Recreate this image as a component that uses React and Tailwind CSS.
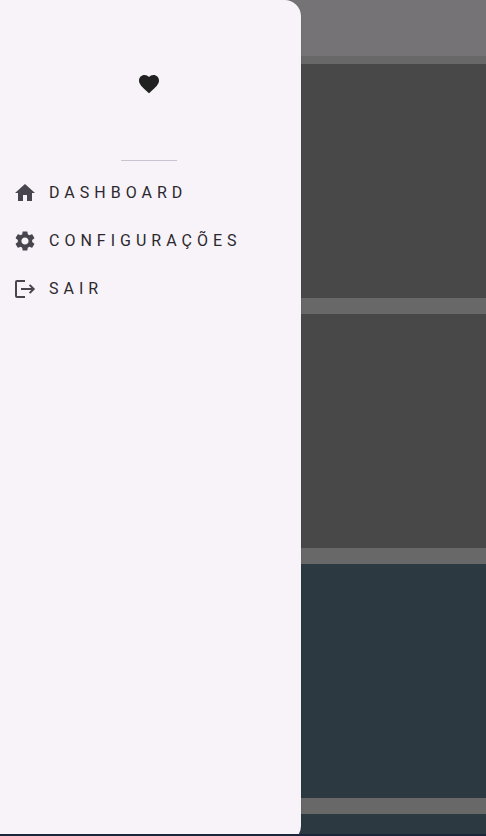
import { MdFavorite, MdHome, MdSettings } from "react-icons/md";

function LogoutIcon(props) {
  return (
    <svg viewBox="0 0 24 24" fill="none" stroke="currentColor" strokeWidth="2" {...props}>
      <path d="M12 4H4a1 1 0 0 0-1 1v14a1 1 0 0 0 1 1h8" />
      <path d="M8 12h12.5" />
      <path d="M16.6 7.9l4.1 4.1-4.1 4.1" />
    </svg>
  );
}

const items = [
  { label: "DASHBOARD", icon: MdHome },
  { label: "CONFIGURAÇÕES", icon: MdSettings },
  { label: "SAIR", icon: LogoutIcon },
];

function Drawer() {
  return (
    <aside className="absolute top-0 left-0 -bottom-2 w-[301px] rounded-r-2xl bg-[#f7f3f9] pr-1 shadow-[0_0_1px_#00000080]">
      <header className="flex flex-col items-center pt-[72px]">
        <MdFavorite className="size-6 text-[#212121]" aria-hidden="true" />
        <hr className="mt-16 w-14 border-t border-[#cac4d0]" />
      </header>
      <nav className="mt-2">
        <ul>
          {items.map(({ label, icon: Icon }) => (
            <li key={label}>
              <button
                type="button"
                className="flex h-12 w-full items-center gap-3 pl-[13px] text-left text-base tracking-[5px] text-[#2b292e]"
              >
                <Icon className="size-6 shrink-0 text-[#49454f]" aria-hidden="true" />
                <span>{label}</span>
              </button>
            </li>
          ))}
        </ul>
      </nav>
    </aside>
  );
}

export default function App() {
  return (
    <div className="flex h-screen flex-col overflow-hidden bg-[#1b263b] font-['Roboto',sans-serif]">
      <div className="relative flex-1 overflow-hidden bg-[#686868]">
        <main className="flex flex-col">
          <div className="h-14 bg-[#757376]" />
          <div className="flex flex-col gap-4 pt-2">
            <section className="h-[234px] bg-[#484848]" />
            <section className="h-[234px] bg-[#484848]" />
            <section className="h-[234px] bg-[#2c3941]" />
            <section className="h-[234px] bg-[#2c3941]" />
          </div>
        </main>
        <Drawer />
      </div>
      <div className="h-0.5 shrink-0 bg-[#1b263b]" />
    </div>
  );
}
